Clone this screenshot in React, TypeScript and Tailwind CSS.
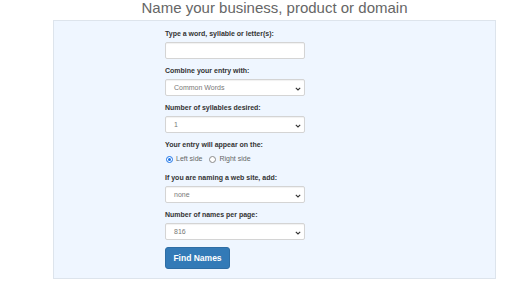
import React from "react";

const selects: { label: string; value: string }[] = [
  { label: "Combine your entry with:", value: "Common Words" },
  { label: "Number of syllables desired:", value: "1" },
];

function Chevron() {
  return (
    <svg width="6" height="4" viewBox="0 0 6 4" className="absolute right-[3px] top-[7px]">
      <path d="M0.8 0.8 L3 3 L5.2 0.8" fill="none" stroke="#333" strokeWidth="1.1" />
    </svg>
  );
}

function Select({ value }: { value: string }) {
  return (
    <div className="relative h-[17px] w-[140px] rounded-[2px] border border-[#d4d4d4] bg-white shadow-[inset_0_1px_1px_rgba(0,0,0,0.06)]">
      <span className="absolute left-[8px] top-0 text-[7px] leading-[15px] text-[#777]">{value}</span>
      <Chevron />
    </div>
  );
}

function Label({ children }: { children: React.ReactNode }) {
  return <div className="mb-[3px] h-[10px] text-[7px] font-bold leading-[10px] text-[#333]">{children}</div>;
}

function Radio({ checked, label }: { checked?: boolean; label: string }) {
  return (
    <span className="flex items-center gap-[3px]">
      {checked ? (
        <span className="flex h-[7px] w-[7px] items-center justify-center rounded-full border border-[#1a73e8] bg-white">
          <span className="h-[3px] w-[3px] rounded-full bg-[#1a73e8]" />
        </span>
      ) : (
        <span className="h-[7px] w-[7px] rounded-full border border-[#8a8a8a] bg-white" />
      )}
      <span className="text-[7px] text-[#666]">{label}</span>
    </span>
  );
}

export default function App() {
  return (
    <div className="h-[286px] w-[512px] overflow-hidden bg-white font-['Liberation_Sans',Arial,sans-serif]">
      <div className="ml-[53px] w-[443px]">
        <h1 className="h-[20px] text-center text-[15px] font-normal leading-[15px] text-[#666]">
          Name your business, product or domain
        </h1>
        <div className="border border-[#dde4ec] bg-[#eff6ff] pb-[9px] pl-[111px] pt-[8px]">
          <div className="flex w-[140px] flex-col gap-[7px]">
            <div>
              <Label>Type a word, syllable or letter(s):</Label>
              <div className="h-[17px] w-[140px] rounded-[2px] border border-[#d4d4d4] bg-white shadow-[inset_0_1px_1px_rgba(0,0,0,0.06)]" />
            </div>
            {selects.map((s) => (
              <div key={s.label}>
                <Label>{s.label}</Label>
                <Select value={s.value} />
              </div>
            ))}
            <div>
              <Label>Your entry will appear on the:</Label>
              <div className="flex h-[13px] items-center gap-[7px] pl-[1px]">
                <Radio checked label="Left side" />
                <Radio label="Right side" />
              </div>
            </div>
            <div>
              <Label>If you are naming a web site, add:</Label>
              <Select value="none" />
            </div>
            <div>
              <Label>Number of names per page:</Label>
              <Select value="816" />
            </div>
            <button className="h-[22px] w-[65px] rounded-[3px] border border-[#2e6da4] bg-[#337ab7] text-[8.5px] font-bold text-white">
              Find Names
            </button>
          </div>
        </div>
      </div>
    </div>
  );
}
